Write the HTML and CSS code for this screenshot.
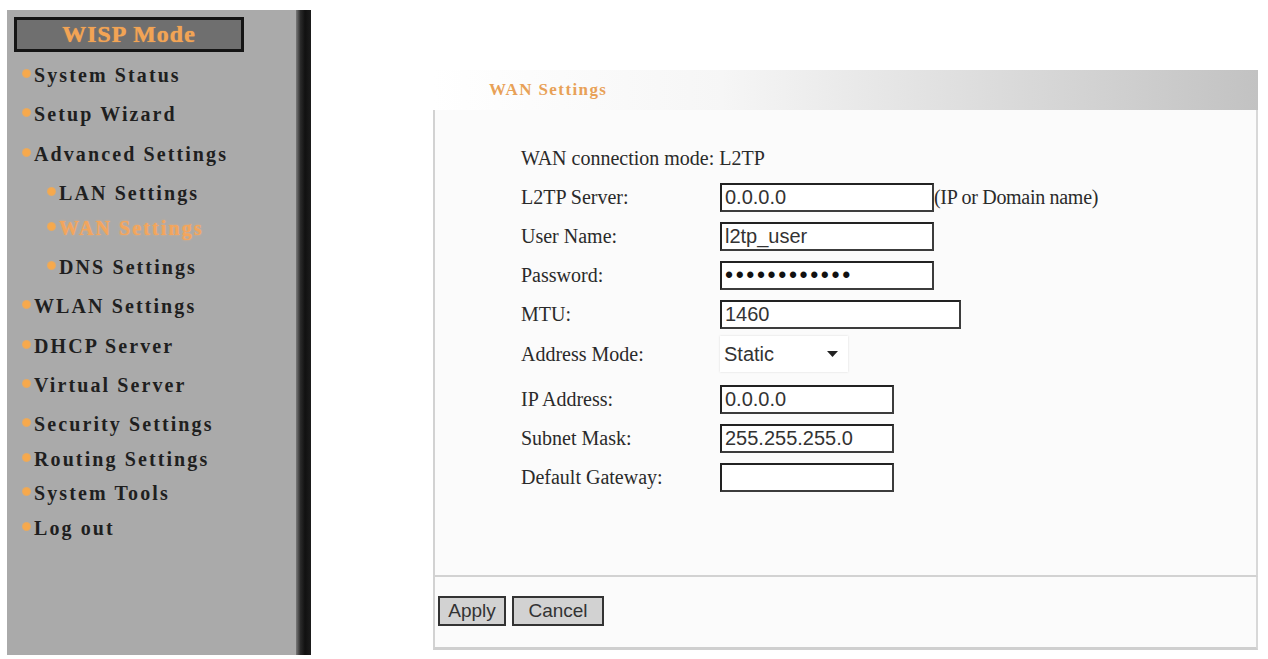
FILE: index.html
```html
<!DOCTYPE html>
<html lang="en">
<head>
<meta charset="utf-8">
<title>WAN Settings</title>
<link rel="stylesheet" href="styles.css">
</head>
<body>
<aside class="sidebar">
  <nav class="nav">
    <div class="mode">WISP Mode</div>
    <ul class="menu">
      <li class="item">System Status</li>
      <li class="item g15">Setup Wizard</li>
      <li class="item g16">Advanced Settings</li>
      <li class="item sub g15">LAN Settings</li>
      <li class="item sub g11 active">WAN Settings</li>
      <li class="item sub g15">DNS Settings</li>
      <li class="item g15">WLAN Settings</li>
      <li class="item g16">DHCP Server</li>
      <li class="item g15">Virtual Server</li>
      <li class="item g15">Security Settings</li>
      <li class="item g11">Routing Settings</li>
      <li class="item g10">System Tools</li>
      <li class="item g11">Log out</li>
    </ul>
  </nav>
  <div class="rail"></div>
</aside>
<main class="main">
  <section class="panel">
    <header class="panel-head">WAN Settings</header>
    <div class="panel-body">
      <form class="form">
        <div class="row mode-line">WAN connection mode: L2TP</div>
        <div class="row">
          <label class="lbl">L2TP Server:</label>
          <input class="txt w214" type="text" value="0.0.0.0"><span class="hint">(IP or Domain name)</span>
        </div>
        <div class="row">
          <label class="lbl">User Name:</label>
          <input class="txt w214" type="text" value="l2tp_user">
        </div>
        <div class="row">
          <label class="lbl">Password:</label>
          <input class="txt w214 pw" type="password" value="abcdefghijkl">
        </div>
        <div class="row">
          <label class="lbl">MTU:</label>
          <input class="txt w241" type="text" value="1460">
        </div>
        <div class="row sel-row">
          <label class="lbl">Address Mode:</label>
          <div class="select"><span>Static</span><svg width="11" height="6" viewBox="0 0 11 6"><path d="M0 0H11L5.5 6Z" fill="#222"/></svg></div>
        </div>
        <div class="row">
          <label class="lbl">IP Address:</label>
          <input class="txt w174" type="text" value="0.0.0.0">
        </div>
        <div class="row">
          <label class="lbl">Subnet Mask:</label>
          <input class="txt w174" type="text" value="255.255.255.0">
        </div>
        <div class="row">
          <label class="lbl">Default Gateway:</label>
          <input class="txt w174" type="text" value="">
        </div>
      </form>
    </div>
    <footer class="panel-foot">
      <button class="btn" type="button">Apply</button>
      <button class="btn wide" type="button">Cancel</button>
    </footer>
  </section>
</main>
</body>
</html>
```
FILE: styles.css
```css
* { box-sizing: border-box; }
html, body { margin: 0; padding: 0; }
body {
  width: 1268px;
  height: 659px;
  overflow: hidden;
  background: #ffffff;
  display: flex;
  align-items: flex-start;
  font-family: "Liberation Serif", "Times New Roman", serif;
}
.sidebar {
  margin: 10px 0 0 7px;
  height: 645px;
  display: flex;
}
.nav {
  width: 289px;
  background: #aaaaaa;
  padding: 7px 0 0 7px;
}
.rail {
  width: 15px;
  background: linear-gradient(to right, #7a7a7a 0%, #2a2a2a 30%, #111 60%, #1c1c1c 100%);
}
.mode {
  width: 230px;
  height: 35px;
  background: #6f6f6f;
  border: 3px solid #151515;
  color: #f2a455;
  font-weight: bold;
  font-size: 24px;
  letter-spacing: 1px;
  display: flex;
  align-items: center;
  justify-content: center;
  text-shadow: 0 0 1px #f2a455;
}
.menu {
  list-style: none;
  margin: 11px 0 0 0;
  padding: 0;
}
.item {
  height: 24px;
  display: flex;
  align-items: center;
  padding-left: 8px;
  font-weight: bold;
  font-size: 20px;
  letter-spacing: 2.1px;
  color: #1f1f1f;
  white-space: nowrap;
}
.item::before {
  content: "";
  width: 9px;
  height: 9px;
  border-radius: 50%;
  background: radial-gradient(circle, #f7a94c 0%, #f7a94c 45%, rgba(247, 169, 76, 0.35) 100%);
  margin-right: 3px;
  margin-top: -3px;
  flex: none;
}
.item.sub { padding-left: 33px; }
.g10 { margin-top: 10px; }
.g11 { margin-top: 11px; }
.g15 { margin-top: 15px; }
.g16 { margin-top: 16px; }
.item.active { color: #f3a55c; text-shadow: 0 0 2px #f3b070; }
.main {
  flex: 1;
  padding: 70px 11px 0 122px;
}
.panel {
  width: 825px;
}
.panel-head {
  height: 40px;
  padding-left: 56px;
  display: flex;
  align-items: center;
  background: linear-gradient(to right, #ffffff 0%, #f6f6f6 35%, #d6d6d6 75%, #c2c2c2 100%);
  color: #e8a157;
  font-weight: bold;
  font-size: 17px;
  letter-spacing: 1.4px;
}
.panel-body {
  height: 467px;
  border-left: 2px solid #d2d2d2;
  border-right: 2px solid #d8d8d8;
  border-bottom: 2px solid #d2d2d2;
  background: #fbfbfb;
  padding: 36px 0 0 86px;
}
.form {
  display: flex;
  flex-direction: column;
  gap: 10px;
  font-size: 20px;
  color: #2a2a2a;
}
.row {
  display: flex;
  align-items: center;
  white-space: nowrap;
}
.row.mode-line { height: 24px; margin-bottom: 3px; }
.row.sel-row { margin: -3px 0 3px; }
.lbl { width: 199px; flex: none; }
.txt {
  height: 29px;
  padding: 0 3px;
  border: 2px solid #3c3c3c;
  border-top-color: #222;
  border-left-color: #222;
  background: #fff;
  font-family: "Liberation Sans", Arial, sans-serif;
  font-size: 20px;
  color: #333;
  outline: none;
}
.w214 { width: 214px; }
.w241 { width: 241px; }
.w174 { width: 174px; }
.pw { font-size: 23px; letter-spacing: 2.6px; color: #111; }
.hint { font-size: 20px; color: #2a2a2a; letter-spacing: -0.3px; }
.select {
  width: 128px;
  height: 36px;
  background: #fff;
  box-shadow: 0 0 2px #d8d8d8;
  display: flex;
  align-items: center;
  justify-content: space-between;
  padding: 0 10px 0 4px;
  font-family: "Liberation Sans", Arial, sans-serif;
  font-size: 20px;
  color: #333;
}
.panel-foot {
  height: 73px;
  border-left: 2px solid #d2d2d2;
  border-right: 2px solid #d8d8d8;
  border-bottom: 3px solid #cfcfcf;
  background: #fbfbfb;
  padding: 19px 0 0 3px;
  display: flex;
  align-items: flex-start;
  gap: 6px;
}
.btn {
  height: 30px;
  width: 68px;
  padding: 0;
  border: 2px solid #333;
  background: #d2d2d2;
  font-family: "Liberation Sans", Arial, sans-serif;
  font-size: 19px;
  color: #333;
}
.btn.wide { width: 92px; }
```
